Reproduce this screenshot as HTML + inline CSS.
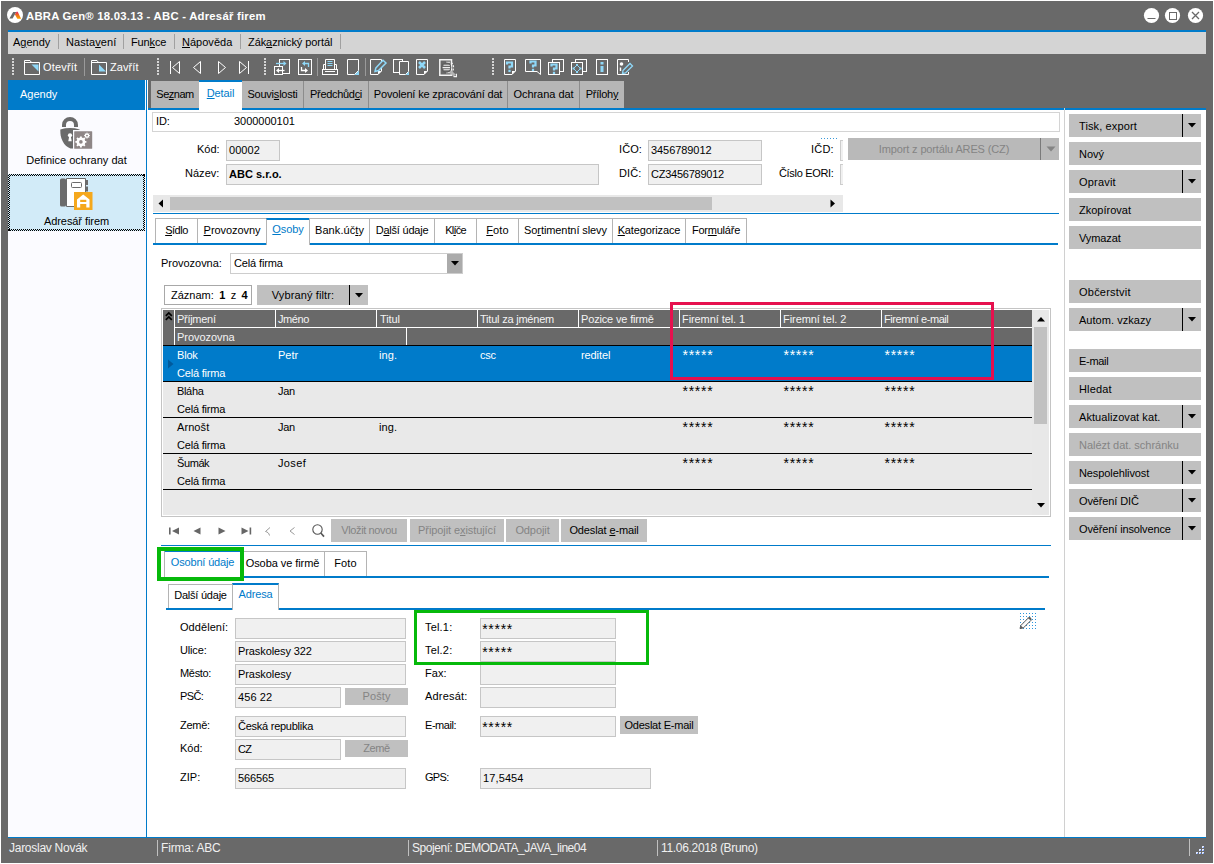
<!DOCTYPE html>
<html lang="cs"><head><meta charset="utf-8"><title>ABRA Gen - Adresář firem</title>
<style>
html,body{margin:0;padding:0}
body{width:1214px;height:864px;position:relative;overflow:hidden;background:#696969;font-family:"Liberation Sans",sans-serif;font-size:11px;color:#000}
.a{position:absolute;box-sizing:border-box}
.t{position:absolute;white-space:nowrap;font-size:11px}
.b{font-weight:bold}
.s12{font-size:12px}
u{text-decoration:underline;text-underline-offset:1px}
svg{overflow:visible}
</style></head><body>
<div class="a" style="left:0px;top:0px;width:1214px;height:864px;background:#ffffff;"></div>
<div class="a" style="left:1px;top:1px;width:1212px;height:862px;background:#696969;"></div>
<svg class="a" style="left:7px;top:7px;" width="16" height="16" viewBox="0 0 16 16"><circle cx="8" cy="8" r="8" fill="#fff"/><defs><linearGradient id="lg" x1="0" y1="0" x2="0" y2="1"><stop offset="0" stop-color="#e6195a"/><stop offset="0.45" stop-color="#f26a1b"/><stop offset="1" stop-color="#f7a600"/></linearGradient></defs><path d="M6.2 4.9 L9.3 4.9 L5.6 11.4 L2.4 11.4 Z" fill="#6a6a6a"/><path d="M9.5 4.8 L10.7 4.8 L14.1 11.8 L10.3 11.8 L7.9 7.6 Z" fill="url(#lg)"/></svg>
<div class="t b" style="left:26px;top:8px;line-height:16px;height:16px;color:#fff;letter-spacing:0.247px;font-size:11.3px;"><span>ABRA Gen® 18.03.13 - ABC - Adresář firem</span></div>
<svg class="a" style="left:1144px;top:8px;" width="60" height="16" viewBox="0 0 60 16"><circle cx="7.5" cy="7.5" r="7.6" fill="#fff"/><circle cx="28.5" cy="7.5" r="7.6" fill="#fff"/><circle cx="51.5" cy="7.5" r="7.6" fill="#fff"/><path d="M3.5 10.5H11.5" stroke="#696969" stroke-width="1"/><rect x="25.5" y="4.5" width="7" height="7" fill="none" stroke="#696969" stroke-width="1"/><path d="M48 4L55 11M55 4L48 11" stroke="#696969" stroke-width="1.3"/></svg>
<div class="a" style="left:8px;top:30px;width:1198px;height:2px;background:#007bca;"></div>
<div class="a" style="left:8px;top:32px;width:1198px;height:22px;background:#d4d4d4;"></div>
<div class="a" style="left:58px;top:34px;width:1px;height:15px;background:#a0a0a0;"></div>
<div class="a" style="left:123px;top:34px;width:1px;height:15px;background:#a0a0a0;"></div>
<div class="a" style="left:174px;top:34px;width:1px;height:15px;background:#a0a0a0;"></div>
<div class="a" style="left:240px;top:34px;width:1px;height:15px;background:#a0a0a0;"></div>
<div class="a" style="left:340px;top:34px;width:1px;height:15px;background:#a0a0a0;"></div>
<div class="t " style="left:13px;top:32px;line-height:20px;height:20px;letter-spacing:-0.005px;"><span>A<u>g</u>endy</span></div>
<div class="t " style="left:66px;top:32px;line-height:20px;height:20px;letter-spacing:0.084px;"><span>Nasta<u>v</u>ení</span></div>
<div class="t " style="left:131px;top:32px;line-height:20px;height:20px;letter-spacing:-0.132px;"><span>Fun<u>k</u>ce</span></div>
<div class="t " style="left:182px;top:32px;line-height:20px;height:20px;letter-spacing:0.016px;"><span><u>N</u>ápověda</span></div>
<div class="t " style="left:248px;top:32px;line-height:20px;height:20px;letter-spacing:-0.077px;"><span>Zák<u>a</u>znický portál</span></div>
<div class="a" style="left:12px;top:58px;width:2px;height:2px;background:#d4d4d4;"></div>
<div class="a" style="left:12px;top:61px;width:2px;height:2px;background:#d4d4d4;"></div>
<div class="a" style="left:12px;top:64px;width:2px;height:2px;background:#d4d4d4;"></div>
<div class="a" style="left:12px;top:67px;width:2px;height:2px;background:#d4d4d4;"></div>
<div class="a" style="left:12px;top:70px;width:2px;height:2px;background:#d4d4d4;"></div>
<div class="a" style="left:12px;top:73px;width:2px;height:2px;background:#d4d4d4;"></div>
<div class="a" style="left:157px;top:58px;width:2px;height:2px;background:#d4d4d4;"></div>
<div class="a" style="left:157px;top:61px;width:2px;height:2px;background:#d4d4d4;"></div>
<div class="a" style="left:157px;top:64px;width:2px;height:2px;background:#d4d4d4;"></div>
<div class="a" style="left:157px;top:67px;width:2px;height:2px;background:#d4d4d4;"></div>
<div class="a" style="left:157px;top:70px;width:2px;height:2px;background:#d4d4d4;"></div>
<div class="a" style="left:157px;top:73px;width:2px;height:2px;background:#d4d4d4;"></div>
<div class="a" style="left:264px;top:58px;width:2px;height:2px;background:#d4d4d4;"></div>
<div class="a" style="left:264px;top:61px;width:2px;height:2px;background:#d4d4d4;"></div>
<div class="a" style="left:264px;top:64px;width:2px;height:2px;background:#d4d4d4;"></div>
<div class="a" style="left:264px;top:67px;width:2px;height:2px;background:#d4d4d4;"></div>
<div class="a" style="left:264px;top:70px;width:2px;height:2px;background:#d4d4d4;"></div>
<div class="a" style="left:264px;top:73px;width:2px;height:2px;background:#d4d4d4;"></div>
<div class="a" style="left:492px;top:58px;width:2px;height:2px;background:#d4d4d4;"></div>
<div class="a" style="left:492px;top:61px;width:2px;height:2px;background:#d4d4d4;"></div>
<div class="a" style="left:492px;top:64px;width:2px;height:2px;background:#d4d4d4;"></div>
<div class="a" style="left:492px;top:67px;width:2px;height:2px;background:#d4d4d4;"></div>
<div class="a" style="left:492px;top:70px;width:2px;height:2px;background:#d4d4d4;"></div>
<div class="a" style="left:492px;top:73px;width:2px;height:2px;background:#d4d4d4;"></div>
<svg class="a" style="left:24px;top:59px;" width="17" height="17" viewBox="0 0 17 17"><path d="M0.5 15.5V1.5H6L7.5 3.5H15.5V15.5Z" fill="none" stroke="#fff" stroke-width="1"/><path d="M0.5 3.5H8" fill="none" stroke="#fff" stroke-width="1"/><path d="M7.5 5.5H14.5V12.5Z" fill="#8fd8f8"/></svg>
<div class="t " style="left:43px;top:59px;line-height:16px;height:16px;color:#fff;letter-spacing:0.169px;"><span>Otevřít</span></div>
<div class="a" style="left:84px;top:58px;width:1px;height:18px;background:#9a9a9a;"></div>
<svg class="a" style="left:91px;top:59px;" width="17" height="17" viewBox="0 0 17 17"><path d="M0.5 15.5V1.5H6L7.5 3.5H15.5V15.5Z" fill="none" stroke="#fff" stroke-width="1"/><path d="M0.5 3.5H8" fill="none" stroke="#fff" stroke-width="1"/><path d="M8 5.5V12.5H15Z" fill="#8fd8f8"/></svg>
<div class="t " style="left:110px;top:59px;line-height:16px;height:16px;color:#fff;letter-spacing:0.079px;"><span>Zavřít</span></div>
<svg class="a" style="left:169px;top:60px;" width="12" height="15" viewBox="0 0 12 15"><path d="M1.5 1V14" fill="none" stroke="#fff" stroke-width="1"/><path d="M10.5 1.5V13.5L3.5 7.5Z" fill="none" stroke="#fff" stroke-width="1"/></svg>
<svg class="a" style="left:192px;top:60px;" width="10" height="15" viewBox="0 0 10 15"><path d="M8.5 1.5V13.5L1.5 7.5Z" fill="none" stroke="#fff" stroke-width="1"/></svg>
<svg class="a" style="left:217px;top:60px;" width="10" height="15" viewBox="0 0 10 15"><path d="M1.5 1.5V13.5L8.5 7.5Z" fill="none" stroke="#fff" stroke-width="1"/></svg>
<svg class="a" style="left:238px;top:60px;" width="12" height="15" viewBox="0 0 12 15"><path d="M1.5 1.5V13.5L8.5 7.5Z" fill="none" stroke="#fff" stroke-width="1"/><path d="M10.5 1V14" fill="none" stroke="#fff" stroke-width="1"/></svg>
<svg class="a" style="left:274px;top:59px;" width="17" height="17" viewBox="0 0 17 17"><rect x="5.5" y="0.5" width="10" height="14" fill="none" stroke="#fff" stroke-width="1"/><rect x="0.5" y="7.5" width="8" height="8" fill="#696969" stroke="#fff"/><path d="M2 4.5H10" stroke="#8fd8f8" stroke-width="1.3"/><path d="M9.5 2L12.5 4.5L9.5 7Z" fill="#8fd8f8"/><path d="M4 11.5H10.5" stroke="#fff" stroke-width="1.3"/><path d="M5 9L2 11.5L5 14Z" fill="#fff"/></svg>
<svg class="a" style="left:298px;top:59px;" width="15" height="17" viewBox="0 0 15 17"><rect x="0.5" y="0.5" width="13" height="15" fill="none" stroke="#fff" stroke-width="1"/><path d="M6 4.5H10.5V8" fill="none" stroke="#8fd8f8" stroke-width="1.3"/><path d="M7 2L4 4.5L7 7Z" fill="#8fd8f8"/><path d="M3.5 8V11.5H8" fill="none" stroke="#fff" stroke-width="1.3"/><path d="M7 9L10 11.5L7 14Z" fill="#fff"/></svg>
<div class="a" style="left:317px;top:58px;width:1px;height:18px;background:#9a9a9a;"></div>
<svg class="a" style="left:322px;top:59px;" width="17" height="17" viewBox="0 0 17 17"><path d="M3.5 10.5V0.5H12.5V10.5" fill="none" stroke="#fff" stroke-width="1"/><path d="M1.5 10.5V5.5H3.5M12.5 5.5H14.5V10.5" fill="none" stroke="#fff" stroke-width="1"/><rect x="0.5" y="10.5" width="15" height="5" fill="none" stroke="#fff" stroke-width="1"/><path d="M3 12.5H13" fill="none" stroke="#fff" stroke-width="1"/><path d="M5.5 2.5H10.5M5.5 4.5H10.5M5.5 6.5H10.5" stroke="#8fd8f8"/></svg>
<svg class="a" style="left:347px;top:59px;" width="13" height="17" viewBox="0 0 13 17"><path d="M0.5 0.5H11.5V11.5L7.5 15.5H0.5Z" fill="none" stroke="#fff" stroke-width="1"/><path d="M12 11.5L7.5 16H12Z" fill="#8fd8f8"/></svg>
<div class="a" style="left:365px;top:58px;width:1px;height:18px;background:#9a9a9a;"></div>
<svg class="a" style="left:370px;top:59px;" width="17" height="17" viewBox="0 0 17 17"><path d="M0.5 0.5H11.5V12L8 15.5H0.5Z" fill="none" stroke="#fff" stroke-width="1"/><path d="M8 15.5V12H11.5Z" fill="#fff"/><path d="M5.8 9L13 1.2L16 4L8.5 11.5L5 12.5Z" fill="#696969" stroke="#8fd8f8" stroke-width="1.5"/></svg>
<svg class="a" style="left:393px;top:59px;" width="17" height="17" viewBox="0 0 17 17"><rect x="0.5" y="0.5" width="9" height="13" fill="none" stroke="#fff" stroke-width="1"/><path d="M6.5 2.5H15.5V12.5L12.5 15.5H6.5Z" fill="#696969" stroke="#fff"/><path d="M16 12.5L12.5 16H16Z" fill="#8fd8f8"/></svg>
<svg class="a" style="left:416px;top:59px;" width="13" height="17" viewBox="0 0 13 17"><path d="M0.5 0.5H11.5V12L8 15.5H0.5Z" fill="none" stroke="#fff" stroke-width="1"/><path d="M8 15.5V12H11.5Z" fill="#fff"/><path d="M3 3L9 9M9 3L3 9" stroke="#8fd8f8" stroke-width="2.5"/></svg>
<svg class="a" style="left:439px;top:59px;" width="18" height="18" viewBox="0 0 18 18"><path d="M0.8 0.8H12.5V16.3H0.8Z" fill="none" stroke="#f4f4f4" stroke-width="1.5"/><path d="M7 3.3H11M4.5 6.3H11M3.5 8.6H11M4.5 10.8H11M7 13.6H11" stroke="#f0f0f0" stroke-width="1.1"/><circle cx="7.2" cy="8.6" r="4.6" fill="none" stroke="#5c5c5c" stroke-width="1.1"/><path d="M12.2 3.5C14.8 5.5 15.2 9.5 13.6 12" fill="none" stroke="#f4f4f4" stroke-width="1.2" stroke-dasharray="2 1.4"/><path d="M11.2 12.2L15.6 16.6" stroke="#b4b4b4" stroke-width="3"/><path d="M14.6 17.6H17.4V14.8" fill="none" stroke="#f4f4f4" stroke-width="1.2"/></svg>
<svg class="a" style="left:504px;top:59px;" width="13" height="17" viewBox="0 0 13 17"><path d="M0.5 0.5H11.5V12L8 15.5H0.5Z" fill="none" stroke="#fff" stroke-width="1"/><path d="M8 15.5V12H11.5Z" fill="#fff"/><path d="M3 5.5V3.5H8V7.5H5.5V9.5" fill="none" stroke="#8fd8f8" stroke-width="2.2"/><rect x="4.4" y="10.8" width="2.2" height="2.2" fill="#8fd8f8"/></svg>
<svg class="a" style="left:525px;top:59px;" width="17" height="17" viewBox="0 0 17 17"><path d="M0.5 0.5H15.5V15.5L12 12.5H0.5Z" fill="none" stroke="#fff" stroke-width="1"/><path d="M5.5 4.5V2.5H10.5V6.5H8.0V8.5" fill="none" stroke="#8fd8f8" stroke-width="2.2"/><rect x="6.9" y="9.8" width="2.2" height="2.2" fill="#8fd8f8"/></svg>
<svg class="a" style="left:548px;top:59px;" width="17" height="17" viewBox="0 0 17 17"><rect x="4.5" y="0.5" width="11" height="12" fill="none" stroke="#fff" stroke-width="1"/><rect x="0.5" y="3.5" width="11" height="12" fill="#696969" stroke="#fff"/><path d="M3.5 7.5V5.5H8.5V9.5H6.0V11.5" fill="none" stroke="#8fd8f8" stroke-width="2.2"/><rect x="4.9" y="12.8" width="2.2" height="2.2" fill="#8fd8f8"/></svg>
<svg class="a" style="left:571px;top:59px;" width="17" height="17" viewBox="0 0 17 17"><rect x="4.5" y="0.5" width="11" height="12" fill="none" stroke="#fff" stroke-width="1"/><rect x="0.5" y="3.5" width="11" height="12" fill="#696969" stroke="#fff"/><path d="M6 6L9.5 9.5L6 13L2.5 9.5Z" fill="none" stroke="#8fd8f8" stroke-width="1"/><path d="M5 5h2v2h-2zM5 12h2v2h-2zM1.5 8.5h2v2h-2zM8.5 8.5h2v2h-2z" fill="#8fd8f8"/></svg>
<svg class="a" style="left:596px;top:59px;" width="13" height="17" viewBox="0 0 13 17"><rect x="0.5" y="0.5" width="11" height="15" fill="none" stroke="#fff" stroke-width="1"/><rect x="4.5" y="3" width="3" height="2.5" fill="#8fd8f8"/><rect x="4.5" y="7" width="3" height="6" fill="#8fd8f8"/></svg>
<svg class="a" style="left:617px;top:59px;" width="17" height="17" viewBox="0 0 17 17"><path d="M11.5 3V0.5H0.5V15.5H11.5V13" fill="none" stroke="#fff" stroke-width="1"/><circle cx="4.5" cy="5" r="1.8" fill="#fff"/><path d="M3.5 8.5V12" stroke="#fff" stroke-width="1.4"/><path d="M6 11.5L13 4.5L15.5 7L8.5 14L5.5 14.5Z" fill="#696969" stroke="#8fd8f8" stroke-width="1.3"/></svg>
<div class="a" style="left:8px;top:80px;width:138px;height:757px;background:#fbfbff;"></div>
<div class="a" style="left:146px;top:80px;width:1px;height:757px;background:#007bca;"></div>
<div class="a" style="left:147px;top:80px;width:1059px;height:757px;background:#fff;"></div>
<div class="a" style="left:8px;top:837px;width:1198px;height:1px;background:#007bca;"></div>
<div class="a" style="left:8px;top:80px;width:137px;height:30px;background:#007bca;"></div>
<div class="t " style="left:20px;top:85px;line-height:18px;height:18px;color:#fff;letter-spacing:-0.002px;"><span>Agendy</span></div>
<svg class="a" style="left:60px;top:117px;" width="33" height="33" viewBox="0 0 33 33"><path d="M4 10V8a6 6 0 0 1 12 0V10" fill="none" stroke="#6b6b6b" stroke-width="4"/><path d="M0.3 12.4Q10 9.6 19.6 12.4V31.6H10.5C3.5 28.5 0 21.5 0.3 12.4Z" fill="#6b6b6b"/><circle cx="10" cy="18.3" r="2.1" fill="#fff"/><path d="M9.2 19L8.3 24.2H11.7L10.8 19Z" fill="#fff"/><rect x="13" y="13" width="20" height="20" fill="#fbfbff"/><rect x="14.2" y="14.2" width="18" height="17.6" rx="0.6" fill="#8e8686"/><circle cx="20.9" cy="24.9" r="3.1" fill="none" stroke="#fff" stroke-width="2.6"/><path d="M20.9 19.4v2M20.9 28.4v2M15.4 24.9h2M24.4 24.9h2M17 21l1.4 1.4M23.4 27.4l1.4 1.4M24.8 21l-1.4 1.4M18.4 27.4l-1.4 1.4" stroke="#fff" stroke-width="1.9"/><circle cx="27" cy="18.6" r="1.7" fill="none" stroke="#fff" stroke-width="1.5"/><path d="M27 15.6v0.9M27 20.7v0.9M24 18.6h0.9M29.1 18.6h0.9M24.9 16.5l0.6 0.6M28.5 20.1l0.6 0.6M29.1 16.5l-0.6 0.6M25.5 20.1l-0.6 0.6" stroke="#fff" stroke-width="1"/></svg>
<div class="t " style="left:8px;width:137px;text-align:center;top:152px;line-height:16px;height:16px;letter-spacing:0.006px;"><span>Definice ochrany dat</span></div>
<div class="a" style="left:8px;top:174px;width:137px;height:57px;background:#d2ebf8;"></div>
<div class="a" style="left:8px;top:174px;width:137px;height:2px;background-image:repeating-conic-gradient(#000 0 25%,transparent 0 50%);background-size:2px 2px;"></div>
<div class="a" style="left:8px;top:229px;width:137px;height:2px;background-image:repeating-conic-gradient(#000 0 25%,transparent 0 50%);background-size:2px 2px;"></div>
<div class="a" style="left:8px;top:174px;width:2px;height:57px;background-image:repeating-conic-gradient(#000 0 25%,transparent 0 50%);background-size:2px 2px;"></div>
<div class="a" style="left:143px;top:174px;width:2px;height:57px;background-image:repeating-conic-gradient(#000 0 25%,transparent 0 50%);background-size:2px 2px;"></div>
<svg class="a" style="left:60px;top:178px;" width="33" height="33" viewBox="0 0 33 33"><rect x="0" y="0.5" width="6" height="28" rx="1.5" fill="#6b6b6b"/><path d="M6.5 0.5H25.5V28.5H6.5Z" fill="#fff" stroke="#6b6b6b"/><rect x="25.5" y="2" width="2.5" height="5" fill="#6b6b6b"/><rect x="25.5" y="8.5" width="2.5" height="5" fill="#6b6b6b"/><rect x="11.5" y="4.5" width="10" height="5" rx="1" fill="#fff" stroke="#6b6b6b"/><rect x="14" y="14" width="18.5" height="18" fill="#f5a81c"/><path d="M23.2 16.5L29.5 21.5V29.5H26.3V26H20.2V29.5H17V21.5Z" fill="#fff"/><rect x="20.2" y="21.8" width="6.1" height="2.2" fill="#f5a81c"/></svg>
<div class="t " style="left:8px;width:137px;text-align:center;top:213px;line-height:16px;height:16px;letter-spacing:-0.072px;"><span>Adresář firem</span></div>
<div class="a" style="left:148px;top:80px;width:916px;height:28px;background:#696969;"></div>
<div class="a" style="left:1064px;top:80px;width:142px;height:28px;background:#696969;"></div>
<div class="a" style="left:148px;top:108px;width:916px;height:2px;background:#007bca;"></div>
<div class="a" style="left:151px;top:81px;width:473px;height:27px;background:#8c8c8c;"></div>
<div class="a" style="left:151px;top:81px;width:48px;height:27px;background:#b6b6b6;"></div>
<div class="t " style="left:151px;width:48px;text-align:center;top:83px;line-height:22px;height:22px;letter-spacing:-0.496px;"><span>Se<u>z</u>nam</span></div>
<div class="a" style="left:199px;top:80px;width:43px;height:30px;background:#fff;"></div>
<div class="a" style="left:199px;top:80px;width:43px;height:2px;background:#007bca;"></div>
<div class="t " style="left:199px;width:43px;text-align:center;top:82px;line-height:22px;height:22px;color:#007bca;letter-spacing:-0.107px;"><span><u>D</u>etail</span></div>
<div class="a" style="left:242px;top:81px;width:61px;height:27px;background:#b6b6b6;"></div>
<div class="t " style="left:242px;width:61px;text-align:center;top:83px;line-height:22px;height:22px;letter-spacing:-0.218px;"><span>Souvi<u>s</u>losti</span></div>
<div class="a" style="left:304px;top:81px;width:64px;height:27px;background:#b6b6b6;"></div>
<div class="t " style="left:304px;width:64px;text-align:center;top:83px;line-height:22px;height:22px;letter-spacing:-0.305px;"><span>Předchůd<u>c</u>i</span></div>
<div class="a" style="left:369px;top:81px;width:138px;height:27px;background:#b6b6b6;"></div>
<div class="t " style="left:369px;width:138px;text-align:center;top:83px;line-height:22px;height:22px;letter-spacing:-0.162px;"><span>Povolení ke zpracování dat</span></div>
<div class="a" style="left:508px;top:81px;width:71px;height:27px;background:#b6b6b6;"></div>
<div class="t " style="left:508px;width:71px;text-align:center;top:83px;line-height:22px;height:22px;letter-spacing:-0.032px;"><span>Ochrana dat</span></div>
<div class="a" style="left:580px;top:81px;width:44px;height:27px;background:#b6b6b6;"></div>
<div class="t " style="left:580px;width:44px;text-align:center;top:83px;line-height:22px;height:22px;letter-spacing:-0.250px;"><span>Příloh<u>y</u></span></div>
<div class="a" style="left:1064px;top:108px;width:1px;height:729px;background:#d0d0d0;"></div>
<div class="a" style="left:1065px;top:108px;width:141px;height:2px;background:#007bca;"></div>
<div class="a" style="left:152px;top:112px;width:908px;height:20px;background:#fff;border:1px solid #d4d4d4;"></div>
<div class="t " style="left:156px;top:112px;line-height:19px;height:19px;letter-spacing:-0.087px;"><span>ID:</span></div>
<div class="t " style="left:234px;top:112px;line-height:19px;height:19px;letter-spacing:-0.039px;"><span>3000000101</span></div>
<div class="t " style="left:197px;top:139px;line-height:21px;height:21px;letter-spacing:-0.010px;"><span>Kód:</span></div>
<div class="a" style="left:226px;top:140px;width:54px;height:21px;background:#f0f0f0;border:1px solid #c6c6c6;"></div>
<div class="t " style="left:229px;top:140px;line-height:20px;height:20px;letter-spacing:0.041px;"><span>00002</span></div>
<div class="t " style="left:185px;top:163px;line-height:21px;height:21px;letter-spacing:0.025px;"><span>Název:</span></div>
<div class="a" style="left:226px;top:164px;width:373px;height:21px;background:#f0f0f0;border:1px solid #c6c6c6;"></div>
<div class="t b" style="left:229px;top:164px;line-height:20px;height:20px;letter-spacing:0.012px;"><span>ABC s.r.o.</span></div>
<div class="t " style="left:619px;top:139px;line-height:21px;height:21px;letter-spacing:0.094px;"><span>IČO:</span></div>
<div class="a" style="left:648px;top:140px;width:114px;height:21px;background:#f0f0f0;border:1px solid #c6c6c6;"></div>
<div class="t " style="left:651px;top:140px;line-height:20px;height:20px;letter-spacing:-0.069px;"><span>3456789012</span></div>
<div class="t " style="left:619px;top:163px;line-height:21px;height:21px;letter-spacing:0.075px;"><span>DIČ:</span></div>
<div class="a" style="left:648px;top:164px;width:114px;height:21px;background:#f0f0f0;border:1px solid #c6c6c6;"></div>
<div class="t " style="left:651px;top:164px;line-height:20px;height:20px;letter-spacing:-0.237px;"><span>CZ3456789012</span></div>
<div class="t " style="left:811px;top:139px;line-height:21px;height:21px;letter-spacing:0.225px;"><span>IČD:</span></div>
<div class="t " style="left:779px;top:163px;line-height:21px;height:21px;letter-spacing:-0.325px;"><span>Číslo EORI:</span></div>
<div class="a" style="left:840px;top:140px;width:3px;height:21px;background:#f0f0f0;border:1px solid #cdcdcd;border-right:0;"></div>
<div class="a" style="left:840px;top:164px;width:3px;height:21px;background:#f0f0f0;border:1px solid #cdcdcd;border-right:0;"></div>
<div class="a" style="left:821px;top:138px;width:1px;height:1px;background:#3a9ad9;"></div>
<div class="a" style="left:824px;top:138px;width:1px;height:1px;background:#3a9ad9;"></div>
<div class="a" style="left:827px;top:138px;width:1px;height:1px;background:#3a9ad9;"></div>
<div class="a" style="left:830px;top:138px;width:1px;height:1px;background:#3a9ad9;"></div>
<div class="a" style="left:833px;top:138px;width:1px;height:1px;background:#3a9ad9;"></div>
<div class="a" style="left:836px;top:138px;width:1px;height:1px;background:#3a9ad9;"></div>
<div class="a" style="left:848px;top:138px;width:211px;height:22px;background:#b9b9b9;"></div>
<div class="a" style="left:1040px;top:138px;width:1px;height:22px;background:#7a7a7a;"></div>
<div class="t " style="left:848px;width:192px;text-align:center;top:138px;line-height:22px;height:22px;color:#848484;letter-spacing:-0.134px;"><span>Import z portálu ARES (CZ)</span></div>
<svg class="a" style="left:1046px;top:146px;" width="10" height="6" viewBox="0 0 10 6"><path d="M0.5 0.5H9.5L5 5.5Z" fill="#848484"/></svg>
<div class="a" style="left:153px;top:195px;width:690px;height:17px;background:#e8e8e8;"></div>
<div class="a" style="left:170px;top:197px;width:542px;height:13px;background:#c1c1c1;"></div>
<svg class="a" style="left:158px;top:199px;" width="6" height="9" viewBox="0 0 6 9"><path d="M5 0.5V8.5L0.5 4.5Z" fill="#000"/></svg>
<svg class="a" style="left:830px;top:199px;" width="6" height="9" viewBox="0 0 6 9"><path d="M0.5 0.5V8.5L5 4.5Z" fill="#000"/></svg>
<div class="a" style="left:153px;top:213px;width:906px;height:1px;background:#007bca;"></div>
<div class="a" style="left:153px;top:243px;width:905px;height:2px;background:#007bca;"></div>
<div class="a" style="left:155px;top:218px;width:43px;height:25px;background:#fff;border:1px solid #b4b4b4;border-bottom:0;"></div>
<div class="t " style="left:155px;width:43px;text-align:center;top:219px;line-height:23px;height:23px;letter-spacing:-0.479px;"><span><u>S</u>ídlo</span></div>
<div class="a" style="left:197px;top:218px;width:70px;height:25px;background:#fff;border:1px solid #b4b4b4;border-bottom:0;"></div>
<div class="t " style="left:197px;width:70px;text-align:center;top:219px;line-height:23px;height:23px;letter-spacing:-0.068px;"><span><u>P</u>rovozovny</span></div>
<div class="a" style="left:266px;top:218px;width:44px;height:27px;background:#fff;border:1px solid #b4b4b4;border-bottom:0;border-top:2px solid #007bca;"></div>
<div class="t " style="left:266px;width:44px;text-align:center;top:218px;line-height:22px;height:22px;color:#007bca;letter-spacing:-0.102px;"><span><u>O</u>soby</span></div>
<div class="a" style="left:309px;top:218px;width:61px;height:25px;background:#fff;border:1px solid #b4b4b4;border-bottom:0;"></div>
<div class="t " style="left:309px;width:61px;text-align:center;top:219px;line-height:23px;height:23px;letter-spacing:0.076px;"><span>Bank.úč<u>t</u>y</span></div>
<div class="a" style="left:369px;top:218px;width:66px;height:25px;background:#fff;border:1px solid #b4b4b4;border-bottom:0;"></div>
<div class="t " style="left:369px;width:66px;text-align:center;top:219px;line-height:23px;height:23px;letter-spacing:-0.215px;"><span>D<u>a</u>lší údaje</span></div>
<div class="a" style="left:434px;top:218px;width:43px;height:25px;background:#fff;border:1px solid #b4b4b4;border-bottom:0;"></div>
<div class="t " style="left:434px;width:43px;text-align:center;top:219px;line-height:23px;height:23px;letter-spacing:-0.754px;"><span>Kl<u>í</u>če</span></div>
<div class="a" style="left:476px;top:218px;width:43px;height:25px;background:#fff;border:1px solid #b4b4b4;border-bottom:0;"></div>
<div class="t " style="left:476px;width:43px;text-align:center;top:219px;line-height:23px;height:23px;letter-spacing:0.092px;"><span><u>F</u>oto</span></div>
<div class="a" style="left:518px;top:218px;width:95px;height:25px;background:#fff;border:1px solid #b4b4b4;border-bottom:0;"></div>
<div class="t " style="left:518px;width:95px;text-align:center;top:219px;line-height:23px;height:23px;letter-spacing:-0.088px;"><span>So<u>r</u>timentní slevy</span></div>
<div class="a" style="left:612px;top:218px;width:74px;height:25px;background:#fff;border:1px solid #b4b4b4;border-bottom:0;"></div>
<div class="t " style="left:612px;width:74px;text-align:center;top:219px;line-height:23px;height:23px;letter-spacing:-0.127px;"><span><u>K</u>ategorizace</span></div>
<div class="a" style="left:685px;top:218px;width:62px;height:25px;background:#fff;border:1px solid #b4b4b4;border-bottom:0;"></div>
<div class="t " style="left:685px;width:62px;text-align:center;top:219px;line-height:23px;height:23px;letter-spacing:-0.227px;"><span>For<u>m</u>uláře</span></div>
<div class="t " style="left:161px;top:253px;line-height:21px;height:21px;letter-spacing:-0.032px;"><span>Provozovna:</span></div>
<div class="a" style="left:230px;top:253px;width:233px;height:21px;background:#fff;border:1px solid #cdcdcd;"></div>
<div class="t " style="left:234px;top:253px;line-height:21px;height:21px;letter-spacing:-0.133px;"><span>Celá firma</span></div>
<div class="a" style="left:447px;top:254px;width:15px;height:19px;background:#ababab;"></div>
<svg class="a" style="left:451px;top:261px;" width="8" height="5" viewBox="0 0 8 5"><path d="M0 0H8L4 4.5Z" fill="#000"/></svg>
<div class="a" style="left:164px;top:285px;width:88px;height:20px;background:#fff;border:1px solid #a8a8a8;"></div>
<div class="t " style="left:171px;top:285px;line-height:20px;height:20px;word-spacing:2.3px;"><span>Záznam: <b>1</b> z <b>4</b></span></div>
<div class="a" style="left:257px;top:285px;width:111px;height:20px;background:#c0c0c0;"></div>
<div class="a" style="left:349px;top:285px;width:1px;height:20px;background:#000;"></div>
<div class="t " style="left:257px;width:92px;text-align:center;top:285px;line-height:20px;height:20px;letter-spacing:0.133px;"><span>Vybraný filtr:</span></div>
<svg class="a" style="left:355px;top:293px;" width="8" height="5" viewBox="0 0 8 5"><path d="M0 0H8L4 4.5Z" fill="#000"/></svg>
<div class="a" style="left:161px;top:308px;width:890px;height:209px;background:#fff;border:1px solid #c4c4c4;"></div>
<div class="a" style="left:163px;top:310px;width:886px;height:205px;background:#e9e9e9;"></div>
<div class="a" style="left:163px;top:310px;width:869px;height:35px;background:#696969;"></div>
<div class="a" style="left:174px;top:310px;width:1px;height:35px;background:#fff;"></div>
<div class="a" style="left:175px;top:327px;width:857px;height:1px;background:#fff;"></div>
<div class="a" style="left:275px;top:310px;width:1px;height:17px;background:#fff;"></div>
<div class="a" style="left:376px;top:310px;width:1px;height:17px;background:#fff;"></div>
<div class="a" style="left:477px;top:310px;width:1px;height:17px;background:#fff;"></div>
<div class="a" style="left:578px;top:310px;width:1px;height:17px;background:#fff;"></div>
<div class="a" style="left:679px;top:310px;width:1px;height:17px;background:#fff;"></div>
<div class="a" style="left:780px;top:310px;width:1px;height:17px;background:#fff;"></div>
<div class="a" style="left:881px;top:310px;width:1px;height:17px;background:#fff;"></div>
<div class="a" style="left:406px;top:328px;width:1px;height:17px;background:#fff;"></div>
<div class="t " style="left:177px;top:311px;line-height:17px;height:17px;color:#f4f4f4;letter-spacing:-0.284px;"><span>Příjmení</span></div>
<div class="t " style="left:278px;top:311px;line-height:17px;height:17px;color:#f4f4f4;letter-spacing:-0.406px;"><span>Jméno</span></div>
<div class="t " style="left:380px;top:311px;line-height:17px;height:17px;color:#f4f4f4;letter-spacing:-0.135px;"><span>Titul</span></div>
<div class="t " style="left:480px;top:311px;line-height:17px;height:17px;color:#f4f4f4;letter-spacing:-0.216px;"><span>Titul za jménem</span></div>
<div class="t " style="left:581px;top:311px;line-height:17px;height:17px;color:#f4f4f4;letter-spacing:-0.160px;"><span>Pozice ve firmě</span></div>
<div class="t " style="left:682px;top:311px;line-height:17px;height:17px;color:#f4f4f4;letter-spacing:-0.085px;"><span>Firemní tel. 1</span></div>
<div class="t " style="left:783px;top:311px;line-height:17px;height:17px;color:#f4f4f4;letter-spacing:-0.063px;"><span>Firemní tel. 2</span></div>
<div class="t " style="left:884px;top:311px;line-height:17px;height:17px;color:#f4f4f4;letter-spacing:-0.421px;"><span>Firemní e-mail</span></div>
<div class="t " style="left:177px;top:329px;line-height:17px;height:17px;color:#f4f4f4;letter-spacing:-0.049px;"><span>Provozovna</span></div>
<svg class="a" style="left:165px;top:312px;" width="8" height="9" viewBox="0 0 8 9"><path d="M0.8 3.8L3.8 0.9L6.8 3.8M0.8 7.8L3.8 4.9L6.8 7.8" fill="none" stroke="#000" stroke-width="1.7"/></svg>
<div class="a" style="left:163px;top:345px;width:869px;height:1px;background:#000;"></div>
<div class="a" style="left:163px;top:346px;width:869px;height:35px;background:#007bca;"></div>
<div class="t " style="left:177px;top:347px;line-height:17px;height:17px;color:#fff;letter-spacing:-0.202px;"><span>Blok</span></div>
<div class="t " style="left:278px;top:347px;line-height:17px;height:17px;color:#fff;letter-spacing:-0.022px;"><span>Petr</span></div>
<div class="t " style="left:379px;top:347px;line-height:17px;height:17px;color:#fff;letter-spacing:0.088px;"><span>ing.</span></div>
<div class="t " style="left:480px;top:347px;line-height:17px;height:17px;color:#fff;letter-spacing:-0.300px;"><span>csc</span></div>
<div class="t " style="left:581px;top:347px;line-height:17px;height:17px;color:#fff;letter-spacing:-0.096px;"><span>reditel</span></div>
<div class="t " style="left:682.5px;top:347px;line-height:17px;height:17px;color:#fff;letter-spacing:0.710px;font-size:14px;"><span>*****</span></div>
<div class="t " style="left:783.5px;top:347px;line-height:17px;height:17px;color:#fff;letter-spacing:0.710px;font-size:14px;"><span>*****</span></div>
<div class="t " style="left:884.5px;top:347px;line-height:17px;height:17px;color:#fff;letter-spacing:0.710px;font-size:14px;"><span>*****</span></div>
<div class="t " style="left:177px;top:365px;line-height:17px;height:17px;color:#fff;letter-spacing:-0.203px;"><span>Celá firma</span></div>
<div class="a" style="left:163px;top:381px;width:869px;height:1px;background:#000;"></div>
<div class="t " style="left:177px;top:383px;line-height:17px;height:17px;color:#000;letter-spacing:-0.328px;"><span>Bláha</span></div>
<div class="t " style="left:278px;top:383px;line-height:17px;height:17px;color:#000;letter-spacing:-0.317px;"><span>Jan</span></div>
<div class="t " style="left:682.5px;top:383px;line-height:17px;height:17px;color:#000;letter-spacing:0.710px;font-size:14px;"><span>*****</span></div>
<div class="t " style="left:783.5px;top:383px;line-height:17px;height:17px;color:#000;letter-spacing:0.710px;font-size:14px;"><span>*****</span></div>
<div class="t " style="left:884.5px;top:383px;line-height:17px;height:17px;color:#000;letter-spacing:0.710px;font-size:14px;"><span>*****</span></div>
<div class="t " style="left:177px;top:401px;line-height:17px;height:17px;color:#000;letter-spacing:-0.203px;"><span>Celá firma</span></div>
<div class="a" style="left:163px;top:417px;width:869px;height:1px;background:#000;"></div>
<div class="t " style="left:177px;top:419px;line-height:17px;height:17px;color:#000;letter-spacing:0.084px;"><span>Arnošt</span></div>
<div class="t " style="left:278px;top:419px;line-height:17px;height:17px;color:#000;letter-spacing:-0.317px;"><span>Jan</span></div>
<div class="t " style="left:379px;top:419px;line-height:17px;height:17px;color:#000;letter-spacing:0.088px;"><span>ing.</span></div>
<div class="t " style="left:682.5px;top:419px;line-height:17px;height:17px;color:#000;letter-spacing:0.710px;font-size:14px;"><span>*****</span></div>
<div class="t " style="left:783.5px;top:419px;line-height:17px;height:17px;color:#000;letter-spacing:0.710px;font-size:14px;"><span>*****</span></div>
<div class="t " style="left:884.5px;top:419px;line-height:17px;height:17px;color:#000;letter-spacing:0.710px;font-size:14px;"><span>*****</span></div>
<div class="t " style="left:177px;top:437px;line-height:17px;height:17px;color:#000;letter-spacing:-0.203px;"><span>Celá firma</span></div>
<div class="a" style="left:163px;top:453px;width:869px;height:1px;background:#000;"></div>
<div class="t " style="left:177px;top:455px;line-height:17px;height:17px;color:#000;letter-spacing:-0.410px;"><span>Šumák</span></div>
<div class="t " style="left:278px;top:455px;line-height:17px;height:17px;color:#000;letter-spacing:0.361px;"><span>Josef</span></div>
<div class="t " style="left:682.5px;top:455px;line-height:17px;height:17px;color:#000;letter-spacing:0.710px;font-size:14px;"><span>*****</span></div>
<div class="t " style="left:783.5px;top:455px;line-height:17px;height:17px;color:#000;letter-spacing:0.710px;font-size:14px;"><span>*****</span></div>
<div class="t " style="left:884.5px;top:455px;line-height:17px;height:17px;color:#000;letter-spacing:0.710px;font-size:14px;"><span>*****</span></div>
<div class="t " style="left:177px;top:473px;line-height:17px;height:17px;color:#000;letter-spacing:-0.203px;"><span>Celá firma</span></div>
<div class="a" style="left:163px;top:489px;width:869px;height:1px;background:#000;"></div>
<svg class="a" style="left:168px;top:359px;" width="6" height="10" viewBox="0 0 6 10"><path d="M0 0.5L5.5 5L0 9.5Z" fill="#005a9c"/></svg>
<div class="a" style="left:1032px;top:310px;width:17px;height:205px;background:#e8e8e8;"></div>
<div class="a" style="left:1034px;top:327px;width:13px;height:97px;background:#c1c1c1;"></div>
<svg class="a" style="left:1036.5px;top:316.7px;" width="8" height="5" viewBox="0 0 8 5"><path d="M0 4.5H8L4 0Z" fill="#000"/></svg>
<svg class="a" style="left:1036.5px;top:503px;" width="8" height="5" viewBox="0 0 8 5"><path d="M0 0H8L4 4.5Z" fill="#000"/></svg>
<div class="a" style="left:670px;top:302px;width:324px;height:78px;border:3px solid #e6104e;"></div>
<svg class="a" style="left:169px;top:527px;" width="11" height="8" viewBox="0 0 11 8"><rect x="0" y="0.5" width="1.6" height="7" fill="#666"/><path d="M10 0.5V7.5L3 4Z" fill="#666"/></svg>
<svg class="a" style="left:193px;top:527px;" width="8" height="8" viewBox="0 0 8 8"><path d="M7.5 0.5V7.5L0.5 4Z" fill="#666"/></svg>
<svg class="a" style="left:218px;top:527px;" width="8" height="8" viewBox="0 0 8 8"><path d="M0.5 0.5V7.5L7.5 4Z" fill="#666"/></svg>
<svg class="a" style="left:241px;top:527px;" width="11" height="8" viewBox="0 0 11 8"><path d="M0.5 0.5V7.5L7.5 4Z" fill="#666"/><rect x="8.6" y="0.5" width="1.6" height="7" fill="#666"/></svg>
<svg class="a" style="left:264px;top:527px;" width="8" height="10" viewBox="0 0 8 10"><path d="M6 0.5L1.5 4.5C3.5 5 5 6 5.5 8.5" fill="none" stroke="#9a9a9a" stroke-width="1"/></svg>
<svg class="a" style="left:289px;top:527px;" width="7" height="8" viewBox="0 0 7 8"><path d="M5.5 0.5L1 4L5.5 7.5" fill="none" stroke="#9a9a9a" stroke-width="1"/></svg>
<svg class="a" style="left:312px;top:524px;" width="13" height="14" viewBox="0 0 13 14"><circle cx="5.5" cy="5.5" r="4.7" fill="none" stroke="#555" stroke-width="1.1"/><path d="M8.8 9L12 12.6" stroke="#555" stroke-width="1.6"/></svg>
<div class="a" style="left:331px;top:519px;width:76px;height:23px;background:#c0c0c0;"></div>
<div class="t " style="left:331px;width:76px;text-align:center;top:519px;line-height:23px;height:23px;color:#848484;letter-spacing:-0.378px;"><span>Vložit novou</span></div>
<div class="a" style="left:410px;top:519px;width:94px;height:23px;background:#c0c0c0;"></div>
<div class="t " style="left:410px;width:94px;text-align:center;top:519px;line-height:23px;height:23px;color:#848484;letter-spacing:-0.089px;"><span>Připojit e<u>x</u>istující</span></div>
<div class="a" style="left:506px;top:519px;width:53px;height:23px;background:#c0c0c0;"></div>
<div class="t " style="left:506px;width:53px;text-align:center;top:519px;line-height:23px;height:23px;color:#848484;letter-spacing:-0.096px;"><span>Odpo<u>j</u>it</span></div>
<div class="a" style="left:561px;top:519px;width:86px;height:23px;background:#c0c0c0;"></div>
<div class="t " style="left:561px;width:86px;text-align:center;top:519px;line-height:23px;height:23px;color:#000;letter-spacing:-0.124px;"><span>Odeslat <u>e</u>-mail</span></div>
<div class="a" style="left:161px;top:545px;width:890px;height:1px;background:#007bca;"></div>
<div class="a" style="left:164px;top:576px;width:885px;height:2px;background:#007bca;"></div>
<div class="a" style="left:164px;top:550px;width:77px;height:28px;background:#fff;border:1px solid #b4b4b4;border-bottom:0;border-top:2px solid #007bca;"></div>
<div class="t " style="left:164px;width:77px;text-align:center;top:551px;line-height:22px;height:22px;color:#007bca;letter-spacing:-0.170px;"><span>Osobní údaje</span></div>
<div class="a" style="left:240px;top:551px;width:85px;height:25px;background:#fff;border:1px solid #b4b4b4;border-bottom:0;"></div>
<div class="t " style="left:240px;width:85px;text-align:center;top:551px;line-height:25px;height:25px;letter-spacing:-0.071px;"><span>Osoba ve firmě</span></div>
<div class="a" style="left:324px;top:551px;width:43px;height:25px;background:#fff;border:1px solid #b4b4b4;border-bottom:0;"></div>
<div class="t " style="left:324px;width:43px;text-align:center;top:551px;line-height:25px;height:25px;letter-spacing:0.096px;"><span>Foto</span></div>
<div class="a" style="left:157px;top:547px;width:87px;height:34px;border:4px solid #06b90a;"></div>
<div class="a" style="left:166px;top:608px;width:879px;height:2px;background:#007bca;"></div>
<div class="a" style="left:168px;top:584px;width:65px;height:24px;background:#fff;border:1px solid #b4b4b4;border-bottom:0;"></div>
<div class="t " style="left:168px;width:65px;text-align:center;top:584px;line-height:23px;height:23px;letter-spacing:-0.232px;"><span>Další údaje</span></div>
<div class="a" style="left:232px;top:583px;width:47px;height:27px;background:#fff;border:1px solid #b4b4b4;border-bottom:0;border-top:2px solid #007bca;"></div>
<div class="t " style="left:232px;width:47px;text-align:center;top:584px;line-height:20px;height:20px;color:#007bca;letter-spacing:-0.127px;"><span>Adresa</span></div>
<div class="t " style="left:180px;top:617px;line-height:21px;height:21px;letter-spacing:0.055px;"><span>Oddělení:</span></div>
<div class="t " style="left:180px;top:640px;line-height:21px;height:21px;letter-spacing:-0.153px;"><span>Ulice:</span></div>
<div class="t " style="left:180px;top:663px;line-height:21px;height:21px;letter-spacing:-0.319px;"><span>Město:</span></div>
<div class="t " style="left:180px;top:686px;line-height:21px;height:21px;letter-spacing:-0.597px;"><span>PSČ:</span></div>
<div class="t " style="left:180px;top:715px;line-height:21px;height:21px;letter-spacing:-0.277px;"><span>Země:</span></div>
<div class="t " style="left:180px;top:738px;line-height:21px;height:21px;letter-spacing:-0.010px;"><span>Kód:</span></div>
<div class="t " style="left:180px;top:767px;line-height:21px;height:21px;letter-spacing:0.032px;"><span>ZIP:</span></div>
<div class="a" style="left:235px;top:618px;width:171px;height:21px;background:#f0f0f0;border:1px solid #c6c6c6;"></div>
<div class="a" style="left:235px;top:641px;width:171px;height:21px;background:#f0f0f0;border:1px solid #c6c6c6;"></div>
<div class="t " style="left:238px;top:641px;line-height:20px;height:20px;letter-spacing:-0.094px;"><span>Praskolesy 322</span></div>
<div class="a" style="left:235px;top:664px;width:171px;height:21px;background:#f0f0f0;border:1px solid #c6c6c6;"></div>
<div class="t " style="left:238px;top:664px;line-height:20px;height:20px;letter-spacing:-0.070px;"><span>Praskolesy</span></div>
<div class="a" style="left:235px;top:687px;width:106px;height:21px;background:#f0f0f0;border:1px solid #c6c6c6;"></div>
<div class="t " style="left:238px;top:687px;line-height:20px;height:20px;letter-spacing:0.074px;"><span>456 22</span></div>
<div class="a" style="left:235px;top:716px;width:171px;height:21px;background:#f0f0f0;border:1px solid #c6c6c6;"></div>
<div class="t " style="left:238px;top:716px;line-height:20px;height:20px;letter-spacing:-0.252px;"><span>Česká republika</span></div>
<div class="a" style="left:235px;top:739px;width:106px;height:21px;background:#f0f0f0;border:1px solid #c6c6c6;"></div>
<div class="t " style="left:238px;top:739px;line-height:20px;height:20px;letter-spacing:-0.686px;"><span>CZ</span></div>
<div class="a" style="left:235px;top:768px;width:171px;height:21px;background:#f0f0f0;border:1px solid #c6c6c6;"></div>
<div class="t " style="left:238px;top:768px;line-height:20px;height:20px;letter-spacing:-0.120px;"><span>566565</span></div>
<div class="a" style="left:345px;top:688px;width:63px;height:17px;background:#c0c0c0;"></div>
<div class="t " style="left:345px;width:63px;text-align:center;top:688px;line-height:17px;height:17px;color:#848484;letter-spacing:0.117px;"><span>Pošty</span></div>
<div class="a" style="left:345px;top:740px;width:63px;height:17px;background:#c0c0c0;"></div>
<div class="t " style="left:345px;width:63px;text-align:center;top:740px;line-height:17px;height:17px;color:#848484;letter-spacing:-0.381px;"><span>Země</span></div>
<div class="t " style="left:425px;top:617px;line-height:21px;height:21px;letter-spacing:0.184px;"><span>Tel.1:</span></div>
<div class="t " style="left:425px;top:640px;line-height:21px;height:21px;letter-spacing:0.184px;"><span>Tel.2:</span></div>
<div class="t " style="left:425px;top:663px;line-height:21px;height:21px;letter-spacing:0.048px;"><span>Fax:</span></div>
<div class="t " style="left:425px;top:686px;line-height:21px;height:21px;letter-spacing:0.191px;"><span>Adresát:</span></div>
<div class="t " style="left:425px;top:715px;line-height:21px;height:21px;letter-spacing:-0.448px;"><span>E-mail:</span></div>
<div class="t " style="left:425px;top:767px;line-height:21px;height:21px;letter-spacing:-0.699px;"><span>GPS:</span></div>
<div class="a" style="left:480px;top:618px;width:136px;height:21px;background:#f0f0f0;border:1px solid #c6c6c6;"></div>
<div class="t " style="left:482.2px;top:620.6px;line-height:17px;height:17px;color:#000;letter-spacing:0.710px;font-size:14px;"><span>*****</span></div>
<div class="a" style="left:480px;top:641px;width:136px;height:21px;background:#f0f0f0;border:1px solid #c6c6c6;"></div>
<div class="t " style="left:482.2px;top:643.6px;line-height:17px;height:17px;color:#000;letter-spacing:0.710px;font-size:14px;"><span>*****</span></div>
<div class="a" style="left:480px;top:664px;width:136px;height:21px;background:#f0f0f0;border:1px solid #c6c6c6;"></div>
<div class="a" style="left:480px;top:687px;width:136px;height:21px;background:#f0f0f0;border:1px solid #c6c6c6;"></div>
<div class="a" style="left:480px;top:716px;width:136px;height:21px;background:#f0f0f0;border:1px solid #c6c6c6;"></div>
<div class="t " style="left:482.2px;top:718.6px;line-height:17px;height:17px;color:#000;letter-spacing:0.710px;font-size:14px;"><span>*****</span></div>
<div class="a" style="left:480px;top:768px;width:171px;height:21px;background:#f0f0f0;border:1px solid #c6c6c6;"></div>
<div class="t " style="left:483px;top:768px;line-height:20px;height:20px;letter-spacing:0.119px;"><span>17,5454</span></div>
<div class="a" style="left:620px;top:716px;width:78px;height:18px;background:#c0c0c0;"></div>
<div class="t " style="left:620px;width:78px;text-align:center;top:716px;line-height:18px;height:18px;letter-spacing:-0.224px;"><span>Odeslat E-mail</span></div>
<div class="a" style="left:414px;top:610px;width:235px;height:55px;border:3px solid #06b90a;"></div>
<div class="a" style="left:1020px;top:613px;width:1px;height:1px;background:#2a95dc;"></div>
<div class="a" style="left:1023px;top:613px;width:1px;height:1px;background:#2a95dc;"></div>
<div class="a" style="left:1026px;top:613px;width:1px;height:1px;background:#2a95dc;"></div>
<div class="a" style="left:1029px;top:613px;width:1px;height:1px;background:#2a95dc;"></div>
<div class="a" style="left:1032px;top:613px;width:1px;height:1px;background:#2a95dc;"></div>
<div class="a" style="left:1035px;top:613px;width:1px;height:1px;background:#2a95dc;"></div>
<div class="a" style="left:1020px;top:616px;width:1px;height:1px;background:#2a95dc;"></div>
<div class="a" style="left:1023px;top:616px;width:1px;height:1px;background:#2a95dc;"></div>
<div class="a" style="left:1026px;top:616px;width:1px;height:1px;background:#2a95dc;"></div>
<div class="a" style="left:1029px;top:616px;width:1px;height:1px;background:#2a95dc;"></div>
<div class="a" style="left:1032px;top:616px;width:1px;height:1px;background:#2a95dc;"></div>
<div class="a" style="left:1035px;top:616px;width:1px;height:1px;background:#2a95dc;"></div>
<div class="a" style="left:1020px;top:619px;width:1px;height:1px;background:#2a95dc;"></div>
<div class="a" style="left:1023px;top:619px;width:1px;height:1px;background:#2a95dc;"></div>
<div class="a" style="left:1026px;top:619px;width:1px;height:1px;background:#2a95dc;"></div>
<div class="a" style="left:1029px;top:619px;width:1px;height:1px;background:#2a95dc;"></div>
<div class="a" style="left:1032px;top:619px;width:1px;height:1px;background:#2a95dc;"></div>
<div class="a" style="left:1035px;top:619px;width:1px;height:1px;background:#2a95dc;"></div>
<div class="a" style="left:1020px;top:622px;width:1px;height:1px;background:#2a95dc;"></div>
<div class="a" style="left:1023px;top:622px;width:1px;height:1px;background:#2a95dc;"></div>
<div class="a" style="left:1026px;top:622px;width:1px;height:1px;background:#2a95dc;"></div>
<div class="a" style="left:1029px;top:622px;width:1px;height:1px;background:#2a95dc;"></div>
<div class="a" style="left:1032px;top:622px;width:1px;height:1px;background:#2a95dc;"></div>
<div class="a" style="left:1035px;top:622px;width:1px;height:1px;background:#2a95dc;"></div>
<div class="a" style="left:1020px;top:625px;width:1px;height:1px;background:#2a95dc;"></div>
<div class="a" style="left:1023px;top:625px;width:1px;height:1px;background:#2a95dc;"></div>
<div class="a" style="left:1026px;top:625px;width:1px;height:1px;background:#2a95dc;"></div>
<div class="a" style="left:1029px;top:625px;width:1px;height:1px;background:#2a95dc;"></div>
<div class="a" style="left:1032px;top:625px;width:1px;height:1px;background:#2a95dc;"></div>
<div class="a" style="left:1035px;top:625px;width:1px;height:1px;background:#2a95dc;"></div>
<div class="a" style="left:1020px;top:628px;width:1px;height:1px;background:#2a95dc;"></div>
<div class="a" style="left:1023px;top:628px;width:1px;height:1px;background:#2a95dc;"></div>
<div class="a" style="left:1026px;top:628px;width:1px;height:1px;background:#2a95dc;"></div>
<div class="a" style="left:1029px;top:628px;width:1px;height:1px;background:#2a95dc;"></div>
<div class="a" style="left:1032px;top:628px;width:1px;height:1px;background:#2a95dc;"></div>
<div class="a" style="left:1035px;top:628px;width:1px;height:1px;background:#2a95dc;"></div>
<svg class="a" style="left:1019px;top:616px;" width="14" height="14" viewBox="0 0 14 14"><path d="M1 12.5L1.8 9.5L9.5 1.8L12 4.3L4.3 12Z" fill="#fafafa" stroke="#5a5a5a" stroke-width="1"/><path d="M1 12.5L1.8 9.5L4.3 12Z" fill="#5a5a5a"/><path d="M8.5 1.8L11 0.8L12.8 3.2L12 4.3Z" fill="#5a5a5a"/></svg>
<div class="a" style="left:1069px;top:114px;width:132px;height:23px;background:#c0c0c0;"></div>
<div class="t " style="left:1079px;top:115px;line-height:23px;height:23px;color:#000;letter-spacing:0.121px;"><span>Tisk, export</span></div>
<div class="a" style="left:1182px;top:114px;width:1px;height:23px;background:#000;"></div>
<svg class="a" style="left:1188px;top:123px;" width="8" height="5" viewBox="0 0 8 5"><path d="M0 0H8L4 4.5Z" fill="#000"/></svg>
<div class="a" style="left:1069px;top:142px;width:132px;height:23px;background:#c0c0c0;"></div>
<div class="t " style="left:1079px;top:143px;line-height:23px;height:23px;color:#000;letter-spacing:-0.016px;"><span>Nový</span></div>
<div class="a" style="left:1069px;top:170px;width:132px;height:23px;background:#c0c0c0;"></div>
<div class="t " style="left:1079px;top:171px;line-height:23px;height:23px;color:#000;letter-spacing:0.190px;"><span>Opravit</span></div>
<div class="a" style="left:1182px;top:170px;width:1px;height:23px;background:#000;"></div>
<svg class="a" style="left:1188px;top:179px;" width="8" height="5" viewBox="0 0 8 5"><path d="M0 0H8L4 4.5Z" fill="#000"/></svg>
<div class="a" style="left:1069px;top:198px;width:132px;height:23px;background:#c0c0c0;"></div>
<div class="t " style="left:1079px;top:199px;line-height:23px;height:23px;color:#000;letter-spacing:0.003px;"><span>Zkopírovat</span></div>
<div class="a" style="left:1069px;top:226px;width:132px;height:23px;background:#c0c0c0;"></div>
<div class="t " style="left:1079px;top:227px;line-height:23px;height:23px;color:#000;letter-spacing:-0.099px;"><span>Vymazat</span></div>
<div class="a" style="left:1069px;top:280px;width:132px;height:23px;background:#c0c0c0;"></div>
<div class="t " style="left:1079px;top:281px;line-height:23px;height:23px;color:#000;letter-spacing:0.228px;"><span>Občerstvit</span></div>
<div class="a" style="left:1069px;top:308px;width:132px;height:23px;background:#c0c0c0;"></div>
<div class="t " style="left:1079px;top:309px;line-height:23px;height:23px;color:#000;letter-spacing:0.036px;"><span>Autom. vzkazy</span></div>
<div class="a" style="left:1182px;top:308px;width:1px;height:23px;background:#000;"></div>
<svg class="a" style="left:1188px;top:317px;" width="8" height="5" viewBox="0 0 8 5"><path d="M0 0H8L4 4.5Z" fill="#000"/></svg>
<div class="a" style="left:1069px;top:349px;width:132px;height:23px;background:#c0c0c0;"></div>
<div class="t " style="left:1079px;top:350px;line-height:23px;height:23px;color:#000;letter-spacing:-0.312px;"><span>E-mail</span></div>
<div class="a" style="left:1069px;top:377px;width:132px;height:23px;background:#c0c0c0;"></div>
<div class="t " style="left:1079px;top:378px;line-height:23px;height:23px;color:#000;letter-spacing:0.151px;"><span>Hledat</span></div>
<div class="a" style="left:1069px;top:405px;width:132px;height:23px;background:#c0c0c0;"></div>
<div class="t " style="left:1079px;top:406px;line-height:23px;height:23px;color:#000;letter-spacing:0.077px;"><span>Aktualizovat kat.</span></div>
<div class="a" style="left:1182px;top:405px;width:1px;height:23px;background:#000;"></div>
<svg class="a" style="left:1188px;top:414px;" width="8" height="5" viewBox="0 0 8 5"><path d="M0 0H8L4 4.5Z" fill="#000"/></svg>
<div class="a" style="left:1069px;top:433px;width:132px;height:23px;background:#c0c0c0;"></div>
<div class="t " style="left:1079px;top:434px;line-height:23px;height:23px;color:#848484;letter-spacing:-0.024px;"><span>Nalézt dat. schránku</span></div>
<div class="a" style="left:1069px;top:461px;width:132px;height:23px;background:#c0c0c0;"></div>
<div class="t " style="left:1079px;top:462px;line-height:23px;height:23px;color:#000;letter-spacing:-0.096px;"><span>Nespolehlivost</span></div>
<div class="a" style="left:1182px;top:461px;width:1px;height:23px;background:#000;"></div>
<svg class="a" style="left:1188px;top:470px;" width="8" height="5" viewBox="0 0 8 5"><path d="M0 0H8L4 4.5Z" fill="#000"/></svg>
<div class="a" style="left:1069px;top:489px;width:132px;height:23px;background:#c0c0c0;"></div>
<div class="t " style="left:1079px;top:490px;line-height:23px;height:23px;color:#000;letter-spacing:-0.122px;"><span>Ověření DIČ</span></div>
<div class="a" style="left:1182px;top:489px;width:1px;height:23px;background:#000;"></div>
<svg class="a" style="left:1188px;top:498px;" width="8" height="5" viewBox="0 0 8 5"><path d="M0 0H8L4 4.5Z" fill="#000"/></svg>
<div class="a" style="left:1069px;top:517px;width:132px;height:23px;background:#c0c0c0;"></div>
<div class="t " style="left:1079px;top:518px;line-height:23px;height:23px;color:#000;letter-spacing:-0.132px;"><span>Ověření insolvence</span></div>
<div class="a" style="left:1182px;top:517px;width:1px;height:23px;background:#000;"></div>
<svg class="a" style="left:1188px;top:526px;" width="8" height="5" viewBox="0 0 8 5"><path d="M0 0H8L4 4.5Z" fill="#000"/></svg>
<div class="t s12" style="left:9px;top:839px;line-height:18px;height:18px;color:#f0f0f0;letter-spacing:-0.267px;"><span>Jaroslav Novák</span></div>
<div class="a" style="left:157px;top:840px;width:1px;height:16px;background:#c0c0c0;"></div>
<div class="t s12" style="left:161px;top:839px;line-height:18px;height:18px;color:#f0f0f0;letter-spacing:-0.184px;"><span>Firma: ABC</span></div>
<div class="a" style="left:408px;top:840px;width:1px;height:16px;background:#c0c0c0;"></div>
<div class="t s12" style="left:412px;top:839px;line-height:18px;height:18px;color:#f0f0f0;letter-spacing:-0.445px;"><span>Spojení: DEMODATA_JAVA_line04</span></div>
<div class="a" style="left:657px;top:840px;width:1px;height:16px;background:#c0c0c0;"></div>
<div class="t s12" style="left:661px;top:839px;line-height:18px;height:18px;color:#f0f0f0;letter-spacing:-0.323px;"><span>11.06.2018 (Bruno)</span></div>
<div class="a" style="left:1189px;top:839px;width:1px;height:17px;background:#c0c0c0;"></div>
<div class="a" style="left:1202px;top:846px;width:2px;height:2px;background:#7aa0ff;border-top:1px solid #dfe8ff;border-left:1px solid #dfe8ff;"></div>
<div class="a" style="left:1199px;top:849px;width:2px;height:2px;background:#7aa0ff;border-top:1px solid #dfe8ff;border-left:1px solid #dfe8ff;"></div>
<div class="a" style="left:1202px;top:849px;width:2px;height:2px;background:#7aa0ff;border-top:1px solid #dfe8ff;border-left:1px solid #dfe8ff;"></div>
<div class="a" style="left:1196px;top:852px;width:2px;height:2px;background:#7aa0ff;border-top:1px solid #dfe8ff;border-left:1px solid #dfe8ff;"></div>
<div class="a" style="left:1199px;top:852px;width:2px;height:2px;background:#7aa0ff;border-top:1px solid #dfe8ff;border-left:1px solid #dfe8ff;"></div>
<div class="a" style="left:1202px;top:852px;width:2px;height:2px;background:#7aa0ff;border-top:1px solid #dfe8ff;border-left:1px solid #dfe8ff;"></div>
</body></html>
